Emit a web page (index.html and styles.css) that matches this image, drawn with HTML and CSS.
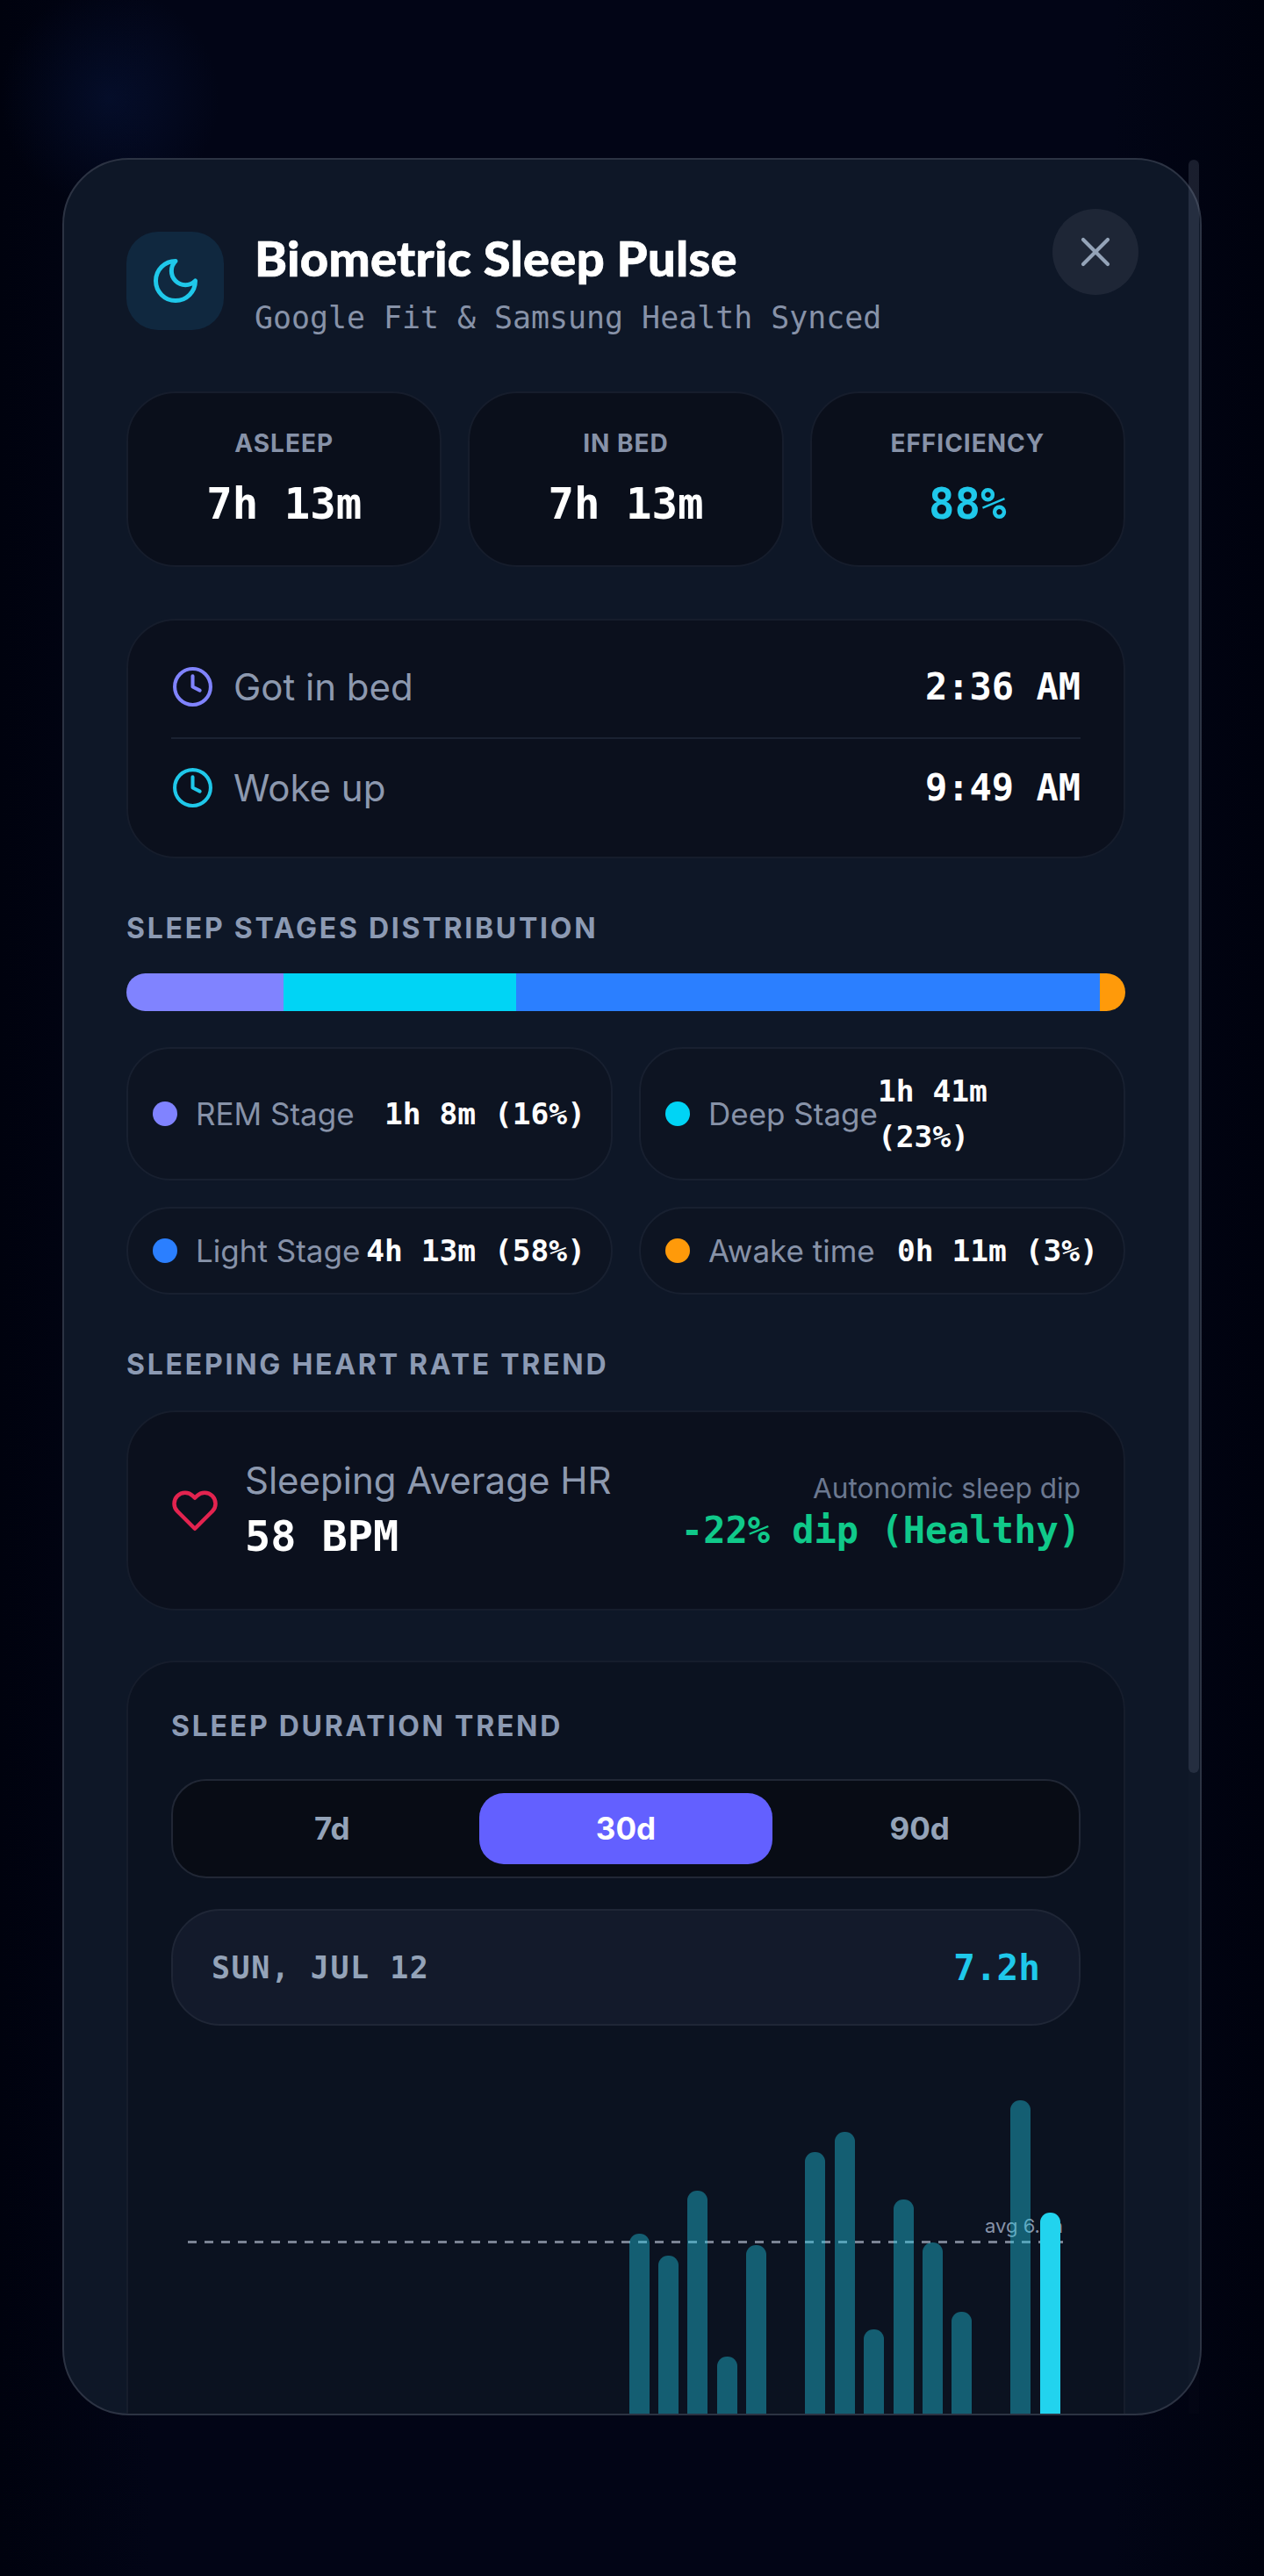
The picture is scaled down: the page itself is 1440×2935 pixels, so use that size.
FILE: index.html
```html
<!DOCTYPE html>
<html lang="en">
<head>
    <meta charset="UTF-8">
    <meta name="viewport" content="width=device-width, initial-scale=1.0">
    <title>Biometric Sleep Pulse</title>
    <link rel="stylesheet" href="styles.css">
</head>
<body>
    <div class="modal-wrap">
        <div class="modal">
            <!-- Header -->
            <div class="header">
                <div class="header-icon">
                    <svg width="60" height="60" viewBox="0 0 24 24" fill="none" stroke="currentColor" stroke-width="2" stroke-linecap="round" stroke-linejoin="round"><path d="M12 3a6 6 0 0 0 9 9 9 9 0 1 1-9-9Z"/></svg>
                </div>
                <div>
                    <div class="title">Biometric Sleep Pulse</div>
                    <div class="subtitle">Google Fit &amp; Samsung Health Synced</div>
                </div>
            </div>
            <button class="close-button" aria-label="Close">
                <svg width="56" height="56" viewBox="0 0 24 24" fill="none" stroke="currentColor" stroke-width="1.8" stroke-linecap="round" stroke-linejoin="round"><path d="M18 6 6 18"/><path d="m6 6 12 12"/></svg>
            </button>

            <!-- Stats -->
            <div class="stats">
                <div class="stat-card">
                    <div class="stat-label">Asleep</div>
                    <div class="stat-value">7h 13m</div>
                </div>
                <div class="stat-card">
                    <div class="stat-label">In Bed</div>
                    <div class="stat-value">7h 13m</div>
                </div>
                <div class="stat-card">
                    <div class="stat-label">Efficiency</div>
                    <div class="stat-value accent">88%</div>
                </div>
            </div>

            <!-- Bed times -->
            <div class="panel times">
                <div class="time-row first">
                    <div class="time-name">
                        <svg class="clock-purple" width="49" height="49" viewBox="0 0 24 24" fill="none" stroke="currentColor" stroke-width="2" stroke-linecap="round" stroke-linejoin="round"><circle cx="12" cy="12" r="10"/><polyline points="12 6 12 12 16 14"/></svg>
                        Got in bed
                    </div>
                    <div class="time-value">2:36 AM</div>
                </div>
                <div class="time-row">
                    <div class="time-name">
                        <svg class="clock-cyan" width="49" height="49" viewBox="0 0 24 24" fill="none" stroke="currentColor" stroke-width="2" stroke-linecap="round" stroke-linejoin="round"><circle cx="12" cy="12" r="10"/><polyline points="12 6 12 12 16 14"/></svg>
                        Woke up
                    </div>
                    <div class="time-value">9:49 AM</div>
                </div>
            </div>

            <!-- Stages -->
            <div class="section-title stages-title">Sleep Stages Distribution</div>
            <div class="stage-bar">
                <div class="seg-rem"></div>
                <div class="seg-deep"></div>
                <div class="seg-light"></div>
                <div class="seg-awake"></div>
            </div>
            <div class="stage-grid">
                <div class="stage-card">
                    <span class="dot seg-rem"></span>
                    <span class="stage-name">REM Stage</span>
                    <span class="stage-value">1h 8m (16%)</span>
                </div>
                <div class="stage-card">
                    <span class="dot seg-deep"></span>
                    <span class="stage-name">Deep Stage</span>
                    <span class="stage-value wrapped">1h 41m<br>(23%)</span>
                </div>
                <div class="stage-card">
                    <span class="dot seg-light"></span>
                    <span class="stage-name">Light Stage</span>
                    <span class="stage-value">4h 13m (58%)</span>
                </div>
                <div class="stage-card">
                    <span class="dot seg-awake"></span>
                    <span class="stage-name">Awake time</span>
                    <span class="stage-value">0h 11m (3%)</span>
                </div>
            </div>

            <!-- Heart rate -->
            <div class="section-title heart-title">Sleeping Heart Rate Trend</div>
            <div class="panel heart-panel">
                <div class="heart-left">
                    <svg class="heart-icon" width="54" height="54" viewBox="0 0 24 24" fill="none" stroke="currentColor" stroke-width="2" stroke-linecap="round" stroke-linejoin="round"><path d="M20.84 4.61a5.5 5.5 0 0 0-7.78 0L12 5.67l-1.06-1.06a5.5 5.5 0 0 0-7.78 7.78l1.06 1.06L12 21.23l7.78-7.78 1.06-1.06a5.5 5.5 0 0 0 0-7.78z"/></svg>
                    <div class="heart-text">
                        <div class="heart-name">Sleeping Average HR</div>
                        <div class="heart-value">58 BPM</div>
                    </div>
                </div>
                <div class="heart-right">
                    <div class="dip-name">Autonomic sleep dip</div>
                    <div class="dip-value">-22% dip (Healthy)</div>
                </div>
            </div>

            <!-- Duration trend -->
            <div class="panel trend">
                <div class="section-title">Sleep Duration Trend</div>
                <div class="range-tabs">
                    <div class="range-tab">7d</div>
                    <div class="range-tab active">30d</div>
                    <div class="range-tab">90d</div>
                </div>
                <div class="readout">
                    <span class="readout-date">SUN, JUL 12</span>
                    <span class="readout-value">7.2h</span>
                </div>
                <div class="chart">
                    <div class="avg-line"></div>
                    <div class="avg-label">avg 6.8h</div>
                    <div class="bar" style="height:0"></div>
                    <div class="bar" style="height:0"></div>
                    <div class="bar" style="height:0"></div>
                    <div class="bar" style="height:0"></div>
                    <div class="bar" style="height:0"></div>
                    <div class="bar" style="height:0"></div>
                    <div class="bar" style="height:0"></div>
                    <div class="bar" style="height:0"></div>
                    <div class="bar" style="height:0"></div>
                    <div class="bar" style="height:0"></div>
                    <div class="bar" style="height:0"></div>
                    <div class="bar" style="height:0"></div>
                    <div class="bar" style="height:0"></div>
                    <div class="bar" style="height:0"></div>
                    <div class="bar" style="height:0"></div>
                    <div class="bar" style="height:254px"></div>
                    <div class="bar" style="height:229px"></div>
                    <div class="bar" style="height:303px"></div>
                    <div class="bar" style="height:114px"></div>
                    <div class="bar" style="height:241px"></div>
                    <div class="bar" style="height:0"></div>
                    <div class="bar" style="height:347px"></div>
                    <div class="bar" style="height:370px"></div>
                    <div class="bar" style="height:145px"></div>
                    <div class="bar" style="height:293px"></div>
                    <div class="bar" style="height:244px"></div>
                    <div class="bar" style="height:165px"></div>
                    <div class="bar" style="height:0"></div>
                    <div class="bar" style="height:406px"></div>
                    <div class="bar current" style="height:278px"></div>
                </div>
            </div>
        </div>
        <div class="scroll-track"><div class="scroll-thumb"></div></div>
    </div>
</body>
</html>
```

FILE: styles.css
```css
/* --- PAGE --- */
body {
    margin: 0;
    padding: 180px 71px 183px;
    font-family: "Inter", "Liberation Sans", sans-serif;
    color: #94a3b8;
    background:
        radial-gradient(circle 125px at 125px 112px, rgba(14, 42, 110, 0.24), rgba(14, 42, 110, 0)),
        linear-gradient(90deg, #00020e 0%, #020516 12%, #020516 88%, #00020e 100%);
}

/* --- MODAL --- */
.modal-wrap {
    position: relative;
}

.modal {
    position: relative;
    height: 2572px;
    box-sizing: border-box;
    padding: 82px 85px 0 71px;
    overflow: hidden;
    background: #0e1727;
    border: 2px solid #2c3343;
    border-radius: 76px;
}

.scroll-track {
    position: absolute;
    top: 2px;
    right: 3px;
    width: 12px;
    height: 2568px;
    background: rgba(255, 255, 255, 0.012);
}

.scroll-thumb {
    height: 1838px;
    border-radius: 6px;
    background: rgba(148, 163, 184, 0.16);
}

/* --- HEADER --- */
.header {
    display: flex;
    align-items: flex-start;
    gap: 35px;
}

.header-icon {
    width: 111px;
    height: 112px;
    display: flex;
    align-items: center;
    justify-content: center;
    color: #1fc8ea;
    background: #10283f;
    border-radius: 36px;
}

.title {
    font-family: "Lato", sans-serif;
    font-size: 56px;
    font-weight: 900;
    line-height: 60px;
    color: #fff;
    letter-spacing: 0.3px;
    -webkit-text-stroke: 0.7px #fff;
}

.subtitle {
    margin-top: 16px;
    font-family: "DejaVu Sans Mono", monospace;
    font-size: 34.9px;
    line-height: 44px;
    color: #8792a8;
}

.close-button {
    position: absolute;
    top: 56px;
    right: 70px;
    width: 98px;
    height: 98px;
    padding: 0;
    display: flex;
    align-items: center;
    justify-content: center;
    color: #94a3b8;
    background: #1e2636;
    border: none;
    border-radius: 50%;
}

/* --- STATS --- */
.stats {
    display: grid;
    grid-template-columns: repeat(3, 1fr);
    gap: 30px;
    margin-top: 62px;
}

.stat-card {
    height: 200px;
    box-sizing: border-box;
    padding-top: 39px;
    text-align: center;
    background: #0a0f1b;
    border: 2px solid #161d2c;
    border-radius: 56px;
}

.stat-label {
    font-size: 28px;
    font-weight: 700;
    line-height: 36px;
    letter-spacing: 1px;
    text-transform: uppercase;
    color: #8792a8;
}

.stat-value {
    margin-top: 22px;
    font-family: "DejaVu Sans Mono", monospace;
    font-size: 49px;
    font-weight: 700;
    line-height: 60px;
    color: #fff;
}

.accent {
    color: #1fc8ea;
}

/* --- PANELS --- */
.panel {
    box-sizing: border-box;
    background: #0b101d;
    border: 2px solid #161d2c;
    border-radius: 56px;
}

.times {
    margin-top: 59px;
    padding: 47px 49px 49px;
}

.time-row {
    display: flex;
    justify-content: space-between;
    align-items: center;
    height: 59px;
}

.time-row.first {
    height: 88px;
    padding-bottom: 29px;
    margin-bottom: 26px;
    box-sizing: border-box;
    border-bottom: 2px solid #1b2232;
}

.time-name {
    display: flex;
    align-items: center;
    gap: 22px;
    font-size: 42px;
    color: #8d99af;
}

.clock-purple {
    color: #8083ff;
}

.clock-cyan {
    color: #1fc8ea;
}

.time-value {
    font-family: "DejaVu Sans Mono", monospace;
    font-size: 42px;
    font-weight: 700;
    color: #fff;
}

/* --- STAGES --- */
.section-title {
    font-size: 32px;
    font-weight: 700;
    line-height: 36px;
    letter-spacing: 2.75px;
    text-transform: uppercase;
    color: #8c9ab3;
}

.stages-title {
    margin-top: 62px;
}

.stage-bar {
    display: flex;
    height: 43px;
    margin-top: 33px;
    overflow: hidden;
    border-radius: 22px;
}

.stage-bar div:nth-child(1) { flex: 68; }
.stage-bar div:nth-child(2) { flex: 101; }
.stage-bar div:nth-child(3) { flex: 253; }
.stage-bar div:nth-child(4) { flex: 11; }

.seg-rem { background: #8083ff; }
.seg-deep { background: #00d4f5; }
.seg-light { background: #2b7fff; }
.seg-awake { background: #ff9a0a; }

.stage-grid {
    display: grid;
    grid-template-columns: 1fr 1fr;
    gap: 30px;
    margin-top: 41px;
}

.stage-card {
    display: flex;
    align-items: center;
    padding: 22px 29px 22px 28px;
    border: 2px solid #182030;
    border-radius: 50px;
    background: #0d1422;
}

.dot {
    flex: none;
    width: 28px;
    height: 28px;
    margin-right: 21px;
    border-radius: 50%;
}

.stage-name {
    font-size: 35px;
    line-height: 52px;
    white-space: nowrap;
    color: #8792a8;
}

.stage-value {
    margin-left: auto;
    font-family: "DejaVu Sans Mono", monospace;
    font-size: 34.6px;
    font-weight: 700;
    line-height: 52px;
    white-space: nowrap;
    color: #fff;
}

.stage-value.wrapped {
    margin-left: 0;
    margin-right: auto;
}

/* --- HEART RATE --- */
.heart-title {
    margin-top: 62px;
}

.heart-panel {
    display: flex;
    justify-content: space-between;
    align-items: center;
    height: 228px;
    margin-top: 34px;
    padding: 0 49px;
}

.heart-left {
    display: flex;
    align-items: center;
    gap: 30px;
}

.heart-icon {
    color: #e3234f;
}

.heart-text {
    padding-bottom: 4px;
}

.heart-name {
    font-size: 42px;
    line-height: 58px;
    color: #8d99af;
}

.heart-value {
    margin-top: 4px;
    font-family: "DejaVu Sans Mono", monospace;
    font-size: 48.5px;
    font-weight: 700;
    line-height: 60px;
    color: #fff;
}

.heart-right {
    text-align: right;
}

.dip-name {
    font-size: 31.6px;
    line-height: 46px;
    color: #6b7890;
}

.dip-value {
    font-family: "DejaVu Sans Mono", monospace;
    font-size: 42px;
    font-weight: 700;
    line-height: 50px;
    color: #10c98a;
}

/* --- DURATION TREND --- */
.trend {
    margin-top: 57px;
    height: 1000px;
    padding: 55px 49px 0;
    background: #0b1220;
}

.range-tabs {
    display: grid;
    grid-template-columns: repeat(3, 1fr);
    margin-top: 42px;
    padding: 14px;
    background: #080c15;
    border: 2px solid #212735;
    border-radius: 40px;
}

.range-tab {
    height: 81px;
    line-height: 81px;
    text-align: center;
    font-size: 35px;
    font-weight: 700;
    color: #94a3b8;
    border-radius: 28px;
}

.range-tab.active {
    color: #fff;
    background: #6360ff;
}

.readout {
    display: flex;
    justify-content: space-between;
    align-items: center;
    box-sizing: border-box;
    height: 133px;
    margin-top: 35px;
    padding: 0 44px;
    background: #131a2b;
    border: 2px solid #1f2636;
    border-radius: 56px;
}

.readout-date {
    font-family: "DejaVu Sans Mono", monospace;
    font-size: 35px;
    font-weight: 700;
    letter-spacing: 1.5px;
    color: #94a3b8;
}

.readout-value {
    font-family: "DejaVu Sans Mono", monospace;
    font-size: 41px;
    font-weight: 700;
    color: #1fc8ea;
}

.chart {
    position: relative;
    display: flex;
    justify-content: space-between;
    align-items: flex-end;
    height: 448px;
    margin: 43px 20px 0 19px;
    padding: 0 3px 0 1px;
}

.avg-line {
    position: absolute;
    top: 202px;
    left: 0;
    right: 0;
    height: 3px;
    background: repeating-linear-gradient(90deg, #7b8394 0 10px, transparent 10px 19px);
}

.avg-label {
    position: absolute;
    top: 171px;
    right: 0;
    font-size: 22px;
    line-height: 28px;
    color: #8792a8;
}

.bar {
    position: relative;
    width: 23px;
    border-radius: 11px 11px 0 0;
    background: rgba(34, 211, 238, 0.4);
}

.bar.current {
    background: #22d3ee;
}
```
